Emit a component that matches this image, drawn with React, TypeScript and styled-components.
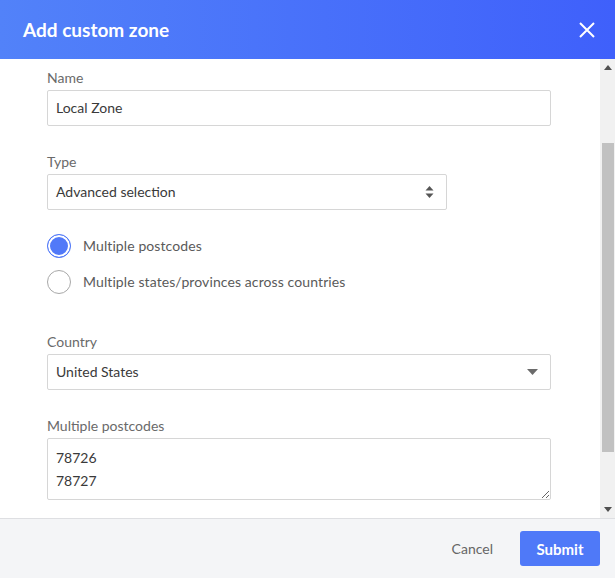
import styled, { createGlobalStyle } from 'styled-components';

const GlobalStyle = createGlobalStyle`
  html, body {
    margin: 0;
    padding: 0;
    background: #fff;
  }
  body {
    font-family: Lato, 'Noto Sans', sans-serif;
    color: #333;
  }
  * {
    box-sizing: border-box;
  }
`;

const Modal = styled.div`
  width: 615px;
  height: 578px;
  display: flex;
  flex-direction: column;
  background: #fff;
  overflow: hidden;
`;

const Header = styled.header`
  height: 59px;
  flex: none;
  display: flex;
  align-items: center;
  justify-content: space-between;
  padding: 0 20px 0 23px;
  background: linear-gradient(90deg, #5282f9 0%, #3f60fb 100%);
`;

const Title = styled.h1`
  margin: 0;
  font-size: 19px;
  font-weight: 700;
  color: #fff;
`;

const CloseButton = styled.button`
  border: 0;
  background: transparent;
  padding: 0;
  width: 16px;
  height: 16px;
  display: flex;
  cursor: pointer;
`;

const Body = styled.div`
  flex: 1;
  min-height: 0;
  display: flex;
`;

const Content = styled.div`
  flex: 1;
  padding: 9px 49px 0 47px;
  display: flex;
  flex-direction: column;
`;

const Field = styled.div<{ $gap?: number }>`
  display: flex;
  flex-direction: column;
  margin-bottom: ${({ $gap }) => $gap ?? 26}px;
`;

const Label = styled.label`
  font-size: 14px;
  line-height: 20px;
  color: #6a6a6a;
  margin-bottom: 2px;
`;

const TextInput = styled.input`
  width: 100%;
  height: 36px;
  border: 1px solid #d6d6d6;
  border-radius: 2px;
  padding: 0 8px 2px;
  font-family: inherit;
  font-size: 14px;
  color: #3a3a3a;
  outline: none;
`;

const SelectBox = styled.div<{ $width?: number }>`
  width: ${({ $width }) => ($width ? `${$width}px` : '100%')};
  height: 36px;
  border: 1px solid #d6d6d6;
  border-radius: 2px;
  padding: 0 12px 2px 8px;
  display: flex;
  align-items: center;
  justify-content: space-between;
  font-size: 14px;
  color: #3a3a3a;

  svg {
    margin-top: 2px;
  }
`;

const TextArea = styled.textarea`
  width: 100%;
  height: 62px;
  border: 1px solid #d6d6d6;
  border-radius: 2px;
  padding: 7px 8px 6px;
  font-family: inherit;
  font-size: 14px;
  line-height: 23px;
  color: #3a3a3a;
  resize: vertical;
  outline: none;
  overflow: hidden;
`;

const RadioGroup = styled.div`
  display: flex;
  flex-direction: column;
  gap: 12px;
  margin-bottom: 38px;
`;

const RadioRow = styled.div`
  display: flex;
  align-items: center;
  gap: 12px;
  height: 24px;
  font-size: 14px;
  color: #5a5a5a;
  letter-spacing: 0.1px;
`;

const RadioText = styled.span`
  padding-bottom: 2px;
`;

const RadioCircle = styled.span<{ $checked?: boolean }>`
  width: 24px;
  height: 24px;
  flex: none;
  border-radius: 50%;
  border: 1px solid ${({ $checked }) => ($checked ? '#5179f8' : '#a8a8a8')};
  background: ${({ $checked }) => ($checked ? '#5179f8' : '#fff')};
  box-shadow: ${({ $checked }) => ($checked ? 'inset 0 0 0 2px #fff' : 'none')};
`;

const Scrollbar = styled.div`
  width: 15px;
  flex: none;
  background: #f1f1f1;
  display: flex;
  flex-direction: column;
`;

const ScrollArrow = styled.div`
  height: 17px;
  flex: none;
  display: flex;
  align-items: center;
  justify-content: center;
`;

const ScrollThumb = styled.div`
  height: 309px;
  margin: 67px 1px 0 2px;
  background: #c1c1c1;
`;

const ScrollSpacer = styled.div`
  flex: 1;
`;

const Footer = styled.footer`
  height: 60px;
  flex: none;
  border-top: 1px solid #dedfe2;
  background: #f4f5f7;
  display: flex;
  align-items: center;
  justify-content: flex-end;
  gap: 27px;
  padding: 0 15px 0 0;
`;

const CancelButton = styled.button`
  border: 0;
  background: transparent;
  font-family: inherit;
  font-size: 14px;
  color: #666;
  padding: 0;
  cursor: pointer;
`;

const SubmitButton = styled.button`
  width: 80px;
  height: 35px;
  border: 0;
  border-radius: 3px;
  background: #4f79f8;
  color: #fff;
  font-family: inherit;
  font-size: 15px;
  font-weight: 700;
  cursor: pointer;
`;

const Triangle = ({ up }: { up?: boolean }) => (
  <svg width="8" height="5" viewBox="0 0 8 5">
    <path d={up ? 'M0 5 L4 0 L8 5 Z' : 'M0 0 L8 0 L4 5 Z'} fill="#505050" />
  </svg>
);

const SpinnerIcon = () => (
  <svg width="9" height="14" viewBox="0 0 9 14">
    <path d="M0.5 5.5 L4.5 1 L8.5 5.5 Z" fill="#555" />
    <path d="M0.5 8.5 L8.5 8.5 L4.5 13 Z" fill="#555" />
  </svg>
);

const CaretIcon = () => (
  <svg width="11" height="6" viewBox="0 0 11 6">
    <path d="M0 0 L11 0 L5.5 6 Z" fill="#6b6b6b" />
  </svg>
);

export default function App() {
  return (
    <>
      <GlobalStyle />
      <Modal>
        <Header>
          <Title>Add custom zone</Title>
          <CloseButton aria-label="Close">
            <svg width="16" height="16" viewBox="0 0 16 16">
              <path d="M1 1 L15 15 M15 1 L1 15" stroke="#fff" strokeWidth="2" />
            </svg>
          </CloseButton>
        </Header>
        <Body>
          <Content>
            <Field>
              <Label>Name</Label>
              <TextInput readOnly value="Local Zone" />
            </Field>
            <Field $gap={24}>
              <Label>Type</Label>
              <SelectBox $width={400}>
                Advanced selection
                <SpinnerIcon />
              </SelectBox>
            </Field>
            <RadioGroup>
              <RadioRow>
                <RadioCircle $checked />
                <RadioText>Multiple postcodes</RadioText>
              </RadioRow>
              <RadioRow>
                <RadioCircle />
                <RadioText>Multiple states/provinces across countries</RadioText>
              </RadioRow>
            </RadioGroup>
            <Field>
              <Label>Country</Label>
              <SelectBox>
                United States
                <CaretIcon />
              </SelectBox>
            </Field>
            <Field>
              <Label>Multiple postcodes</Label>
              <TextArea readOnly value={'78726\n78727'} />
            </Field>
          </Content>
          <Scrollbar>
            <ScrollArrow>
              <Triangle up />
            </ScrollArrow>
            <ScrollThumb />
            <ScrollSpacer />
            <ScrollArrow>
              <Triangle />
            </ScrollArrow>
          </Scrollbar>
        </Body>
        <Footer>
          <CancelButton>Cancel</CancelButton>
          <SubmitButton>Submit</SubmitButton>
        </Footer>
      </Modal>
    </>
  );
}
